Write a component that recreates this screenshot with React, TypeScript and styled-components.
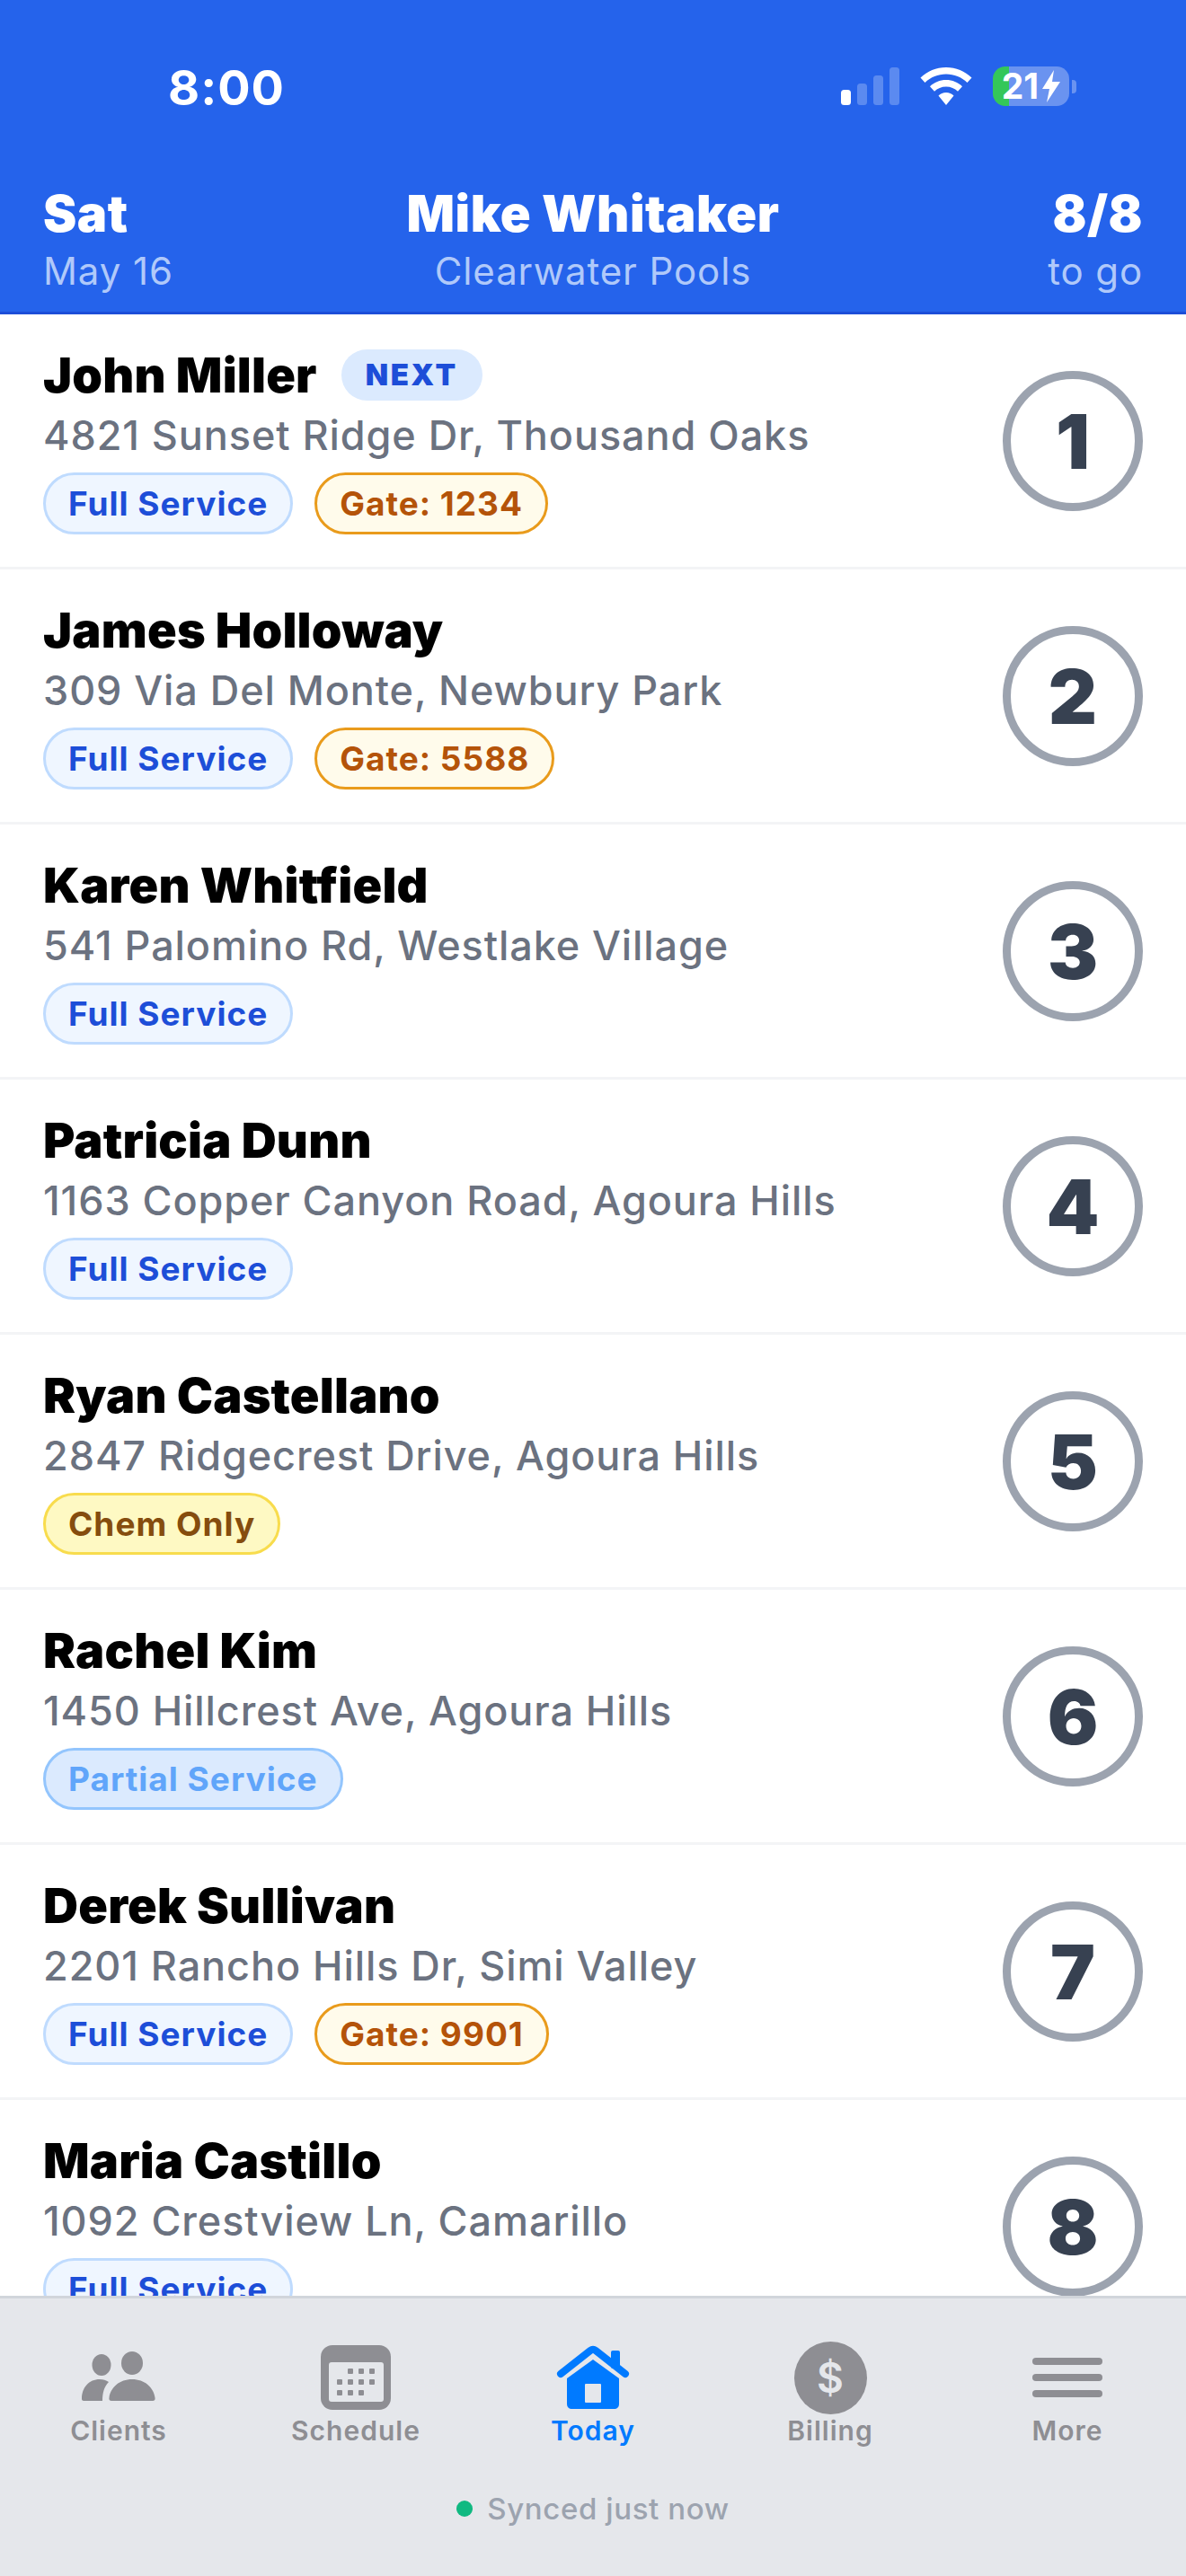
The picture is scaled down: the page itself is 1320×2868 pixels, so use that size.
import styled, { createGlobalStyle } from "styled-components";

const GlobalStyle = createGlobalStyle`
    html, body {
        margin: 0;
        padding: 0;
        background-color: #ffffff;
    }
    * {
        box-sizing: border-box;
    }
`;

const Screen = styled.div`
    width: 1320px;
    height: 2868px;
    display: flex;
    flex-direction: column;
    overflow: hidden;
    font-family: Inter, "Liberation Sans", sans-serif;
`;

const Header = styled.header`
    flex: none;
    height: 350px;
    background-color: #2563eb;
    border-bottom: 3px solid #1d4ed8;
    display: flex;
    flex-direction: column;
`;

const StatusBar = styled.div`
    height: 205px;
    padding: 55px 122px 0 187px;
    display: flex;
    justify-content: space-between;
    align-items: flex-start;
`;

const Time = styled.span`
    color: #ffffff;
    font-size: 54px;
    line-height: 86px;
    font-weight: 700;
    letter-spacing: 1px;
`;

const StatusIcons = styled.div`
    display: flex;
    align-items: center;
    gap: 23px;
    padding-top: 19px;
`;

const Battery = styled.div`
    width: 85px;
    height: 44px;
    border-radius: 14px;
    background: linear-gradient(to right, #34c759 0 18px, #6a93f0 18px);
    display: flex;
    align-items: center;
    justify-content: center;
    gap: 4px;
    color: #ffffff;
    font-size: 39px;
    line-height: 44px;
    font-weight: 700;
`;

const BatteryCap = styled.span`
    width: 5px;
    height: 15px;
    margin-left: -20px;
    border-radius: 0 4px 4px 0;
    background-color: #6a93f0;
`;

const HeaderRow = styled.div`
    padding: 0 48px;
    display: grid;
    grid-template-columns: 1fr auto 1fr;
`;

const HeaderCol = styled.div<{ $align: string }>`
    display: flex;
    flex-direction: column;
    align-items: ${(p) => p.$align};
`;

const HeaderMain = styled.span`
    color: #ffffff;
    font-size: 56px;
    line-height: 66px;
    font-weight: 900;
    letter-spacing: 0.5px;
`;

const HeaderSub = styled.span`
    color: #b0c9fa;
    font-size: 42px;
    line-height: 62px;
    font-weight: 400;
    letter-spacing: 0.9px;
`;

const List = styled.main`
    flex: 1;
    min-height: 0;
    overflow: hidden;
    background-color: #ffffff;
`;

const Row = styled.div`
    height: 284px;
    padding: 39px 48px 0 48px;
    border-bottom: 3px solid #f3f4f6;
    display: flex;
    justify-content: space-between;
`;

const RowBody = styled.div`
    display: flex;
    flex-direction: column;
`;

const NameLine = styled.div`
    height: 57px;
    display: flex;
    align-items: center;
    gap: 27px;
`;

const Name = styled.span`
    color: #000000;
    font-size: 54px;
    line-height: 59px;
    font-weight: 900;
    letter-spacing: 0.2px;
`;

const NextBadge = styled.span`
    height: 57px;
    padding: 0 27px;
    border-radius: 29px;
    background-color: #dbeafe;
    color: #1d4ed8;
    font-size: 33px;
    line-height: 57px;
    font-weight: 900;
    letter-spacing: 2.5px;
`;

const Address = styled.div`
    margin-top: 12px;
    color: #6b7280;
    font-size: 45px;
    line-height: 54px;
    font-weight: 500;
    letter-spacing: 0.92px;
`;

const Tags = styled.div`
    margin-top: 14px;
    display: flex;
    gap: 24px;
`;

const tagColors = {
    full: { bg: "#eff6ff", border: "#bfdbfe", text: "#1d4ed8" },
    gate: { bg: "#fffbeb", border: "#e99b1c", text: "#b45309" },
    chem: { bg: "#fef9c3", border: "#f8dc4d", text: "#854d0e" },
    partial: { bg: "#dbeafe", border: "#93c5fd", text: "#60a5fa" },
};

type TagKind = keyof typeof tagColors;

const Tag = styled.span<{ $kind: TagKind }>`
    height: 69px;
    padding: 0 25px;
    border-radius: 35px;
    border: 3px solid ${(p) => tagColors[p.$kind].border};
    background-color: ${(p) => tagColors[p.$kind].bg};
    color: ${(p) => tagColors[p.$kind].text};
    font-size: 37px;
    line-height: 63px;
    font-weight: 700;
    letter-spacing: 1px;
`;

const StopNumber = styled.div`
    flex: none;
    width: 156px;
    height: 156px;
    margin-top: 24px;
    border-radius: 50%;
    border: 9px solid #9ca3af;
    background-color: #ffffff;
    color: #374151;
    font-size: 84px;
    font-weight: 900;
    display: flex;
    align-items: center;
    justify-content: center;
`;

const TabBar = styled.footer`
    flex: none;
    height: 312px;
    background-color: #e5e7eb;
    border-top: 3px solid #d1d5db;
`;

const Tabs = styled.nav`
    display: grid;
    grid-template-columns: repeat(5, 1fr);
    padding-top: 47px;
`;

const Tab = styled.div<{ $active?: boolean }>`
    display: flex;
    flex-direction: column;
    align-items: center;
    color: ${(p) => (p.$active ? "#007aff" : "#8e8e93")};
    font-size: 30px;
    line-height: 36px;
    font-weight: 600;
    letter-spacing: 1px;
`;

const TabIcon = styled.div`
    height: 82px;
    display: flex;
    align-items: center;
    justify-content: center;
`;

const BillingIcon = styled.div`
    width: 81px;
    height: 81px;
    border-radius: 50%;
    background-color: #8e8e93;
    color: #e5e7eb;
    font-size: 46px;
    font-weight: 600;
    letter-spacing: 0;
    display: flex;
    align-items: center;
    justify-content: center;
`;

const SyncLine = styled.div`
    margin-top: 48px;
    display: flex;
    align-items: center;
    justify-content: center;
    gap: 16px;
    color: #9ca3af;
    font-size: 33px;
    line-height: 42px;
    font-weight: 500;
    letter-spacing: 0.6px;
`;

const SyncDot = styled.span`
    width: 18px;
    height: 18px;
    border-radius: 50%;
    background-color: #10b981;
`;

type Stop = { name: string; address: string; tags: { kind: TagKind; label: string }[]; next?: boolean };

const full = { kind: "full" as TagKind, label: "Full Service" };
const gate = (code: string) => ({ kind: "gate" as TagKind, label: `Gate: ${code}` });

const stops: Stop[] = [
    { name: "John Miller", address: "4821 Sunset Ridge Dr, Thousand Oaks", tags: [full, gate("1234")], next: true },
    { name: "James Holloway", address: "309 Via Del Monte, Newbury Park", tags: [full, gate("5588")] },
    { name: "Karen Whitfield", address: "541 Palomino Rd, Westlake Village", tags: [full] },
    { name: "Patricia Dunn", address: "1163 Copper Canyon Road, Agoura Hills", tags: [full] },
    { name: "Ryan Castellano", address: "2847 Ridgecrest Drive, Agoura Hills", tags: [{ kind: "chem", label: "Chem Only" }] },
    { name: "Rachel Kim", address: "1450 Hillcrest Ave, Agoura Hills", tags: [{ kind: "partial", label: "Partial Service" }] },
    { name: "Derek Sullivan", address: "2201 Rancho Hills Dr, Simi Valley", tags: [full, gate("9901")] },
    { name: "Maria Castillo", address: "1092 Crestview Ln, Camarillo", tags: [full] },
];

function SignalIcon() {
    return (
        <svg width="65" height="42" viewBox="0 0 65 42">
            <rect x="0" y="25" width="11" height="17" rx="3.5" fill="#ffffff" />
            <rect x="18" y="18" width="11" height="24" rx="3.5" fill="#ffffff" opacity="0.25" />
            <rect x="36" y="9" width="11" height="33" rx="3.5" fill="#ffffff" opacity="0.25" />
            <rect x="54" y="0" width="11" height="42" rx="3.5" fill="#ffffff" opacity="0.25" />
        </svg>
    );
}

function WifiIcon() {
    return (
        <svg width="58" height="42" viewBox="0 0 58 42" fill="#ffffff">
            <path d="M29 0C18 0 8 4.300 0.500 11.500L5.500 17C11.700 11 20 7.500 29 7.500S46.300 11 52.500 17L57.500 11.500C50 4.300 40 0 29 0Z" />
            <path d="M29 14C22 14 15.700 16.700 11 21.200L16 26.700C19.300 23.500 23.900 21.500 29 21.500S38.700 23.500 42 26.700L47 21.200C42.300 16.700 36 14 29 14Z" />
            <path d="M29 28C25.700 28 22.700 29.300 20.500 31.400L29 42L37.500 31.400C35.300 29.300 32.300 28 29 28Z" />
        </svg>
    );
}

function BoltIcon() {
    return (
        <svg width="20" height="36" viewBox="0 0 20 36" fill="#ffffff">
            <path d="M13 0L0 21H8L5 36L20 13H11L13 0Z" />
        </svg>
    );
}

function ClientsIcon() {
    return (
        <svg width="84" height="60" viewBox="0 0 84 60" fill="#8e8e93">
            <ellipse cx="23" cy="16" rx="10.500" ry="12" />
            <ellipse cx="57" cy="14" rx="12" ry="13" />
            <path d="M1 54C1 41 9 32 21 32C25 32 28 33 31 35C26 40 24 47 24 56H3C2 56 1 55 1 54Z" />
            <path d="M34 56C32 56 31 54.500 31.500 52.500C33 41 43 32 57 32S81 41 82.500 52.500C83 54.500 82 56 80 56Z" />
        </svg>
    );
}

function ScheduleIcon() {
    const dots = [
        [33, 29], [45, 29], [57, 29],
        [21, 41], [33, 41], [45, 41], [57, 41],
        [21, 53], [33, 53], [45, 53],
    ];
    return (
        <svg width="78" height="72" viewBox="0 0 78 72">
            <rect width="78" height="72" rx="13" fill="#8e8e93" />
            <rect x="9" y="19" width="61" height="44" rx="3" fill="#e5e7eb" />
            {dots.map(([x, y]) => (
                <rect key={`${x}-${y}`} x={x - 3} y={y - 3} width="6" height="6" rx="1" fill="#8e8e93" />
            ))}
        </svg>
    );
}

function HomeIcon() {
    return (
        <svg width="82" height="74" viewBox="0 0 82 74">
            <path d="M12 38L41 17L70 38V66C70 70 68 72 64 72H18C14 72 12 70 12 66Z" fill="#007aff" />
            <rect x="32" y="44" width="18" height="21" rx="1" fill="#e5e7eb" />
            <rect x="61" y="7" width="10" height="20" rx="2" fill="#007aff" />
            <path d="M5 33L38 7C40 5.500 42 5.500 44 7L77 33" fill="none" stroke="#007aff" strokeWidth="8" strokeLinecap="round" />
        </svg>
    );
}

function MoreIcon() {
    return (
        <svg width="78" height="44" viewBox="0 0 78 44" fill="#8e8e93">
            <rect y="0" width="78" height="8" rx="4" />
            <rect y="18" width="78" height="8" rx="4" />
            <rect y="36" width="78" height="8" rx="4" />
        </svg>
    );
}

function App() {
    return (
        <Screen>
            <GlobalStyle />
            <Header>
                <StatusBar>
                    <Time>8:00</Time>
                    <StatusIcons>
                        <SignalIcon />
                        <WifiIcon />
                        <Battery>
                            21
                            <BoltIcon />
                        </Battery>
                        <BatteryCap />
                    </StatusIcons>
                </StatusBar>
                <HeaderRow>
                    <HeaderCol $align="flex-start">
                        <HeaderMain>Sat</HeaderMain>
                        <HeaderSub>May 16</HeaderSub>
                    </HeaderCol>
                    <HeaderCol $align="center">
                        <HeaderMain>Mike Whitaker</HeaderMain>
                        <HeaderSub>Clearwater Pools</HeaderSub>
                    </HeaderCol>
                    <HeaderCol $align="flex-end">
                        <HeaderMain>8/8</HeaderMain>
                        <HeaderSub>to go</HeaderSub>
                    </HeaderCol>
                </HeaderRow>
            </Header>

            <List>
                {stops.map((stop, i) => (
                    <Row key={stop.name}>
                        <RowBody>
                            <NameLine>
                                <Name>{stop.name}</Name>
                                {stop.next && <NextBadge>NEXT</NextBadge>}
                            </NameLine>
                            <Address>{stop.address}</Address>
                            <Tags>
                                {stop.tags.map((tag) => (
                                    <Tag key={tag.label} $kind={tag.kind}>{tag.label}</Tag>
                                ))}
                            </Tags>
                        </RowBody>
                        <StopNumber>{i + 1}</StopNumber>
                    </Row>
                ))}
            </List>

            <TabBar>
                <Tabs>
                    <Tab>
                        <TabIcon><ClientsIcon /></TabIcon>
                        Clients
                    </Tab>
                    <Tab>
                        <TabIcon><ScheduleIcon /></TabIcon>
                        Schedule
                    </Tab>
                    <Tab $active>
                        <TabIcon><HomeIcon /></TabIcon>
                        Today
                    </Tab>
                    <Tab>
                        <TabIcon><BillingIcon>$</BillingIcon></TabIcon>
                        Billing
                    </Tab>
                    <Tab>
                        <TabIcon><MoreIcon /></TabIcon>
                        More
                    </Tab>
                </Tabs>
                <SyncLine>
                    <SyncDot />
                    Synced just now
                </SyncLine>
            </TabBar>
        </Screen>
    );
}

export default App;
